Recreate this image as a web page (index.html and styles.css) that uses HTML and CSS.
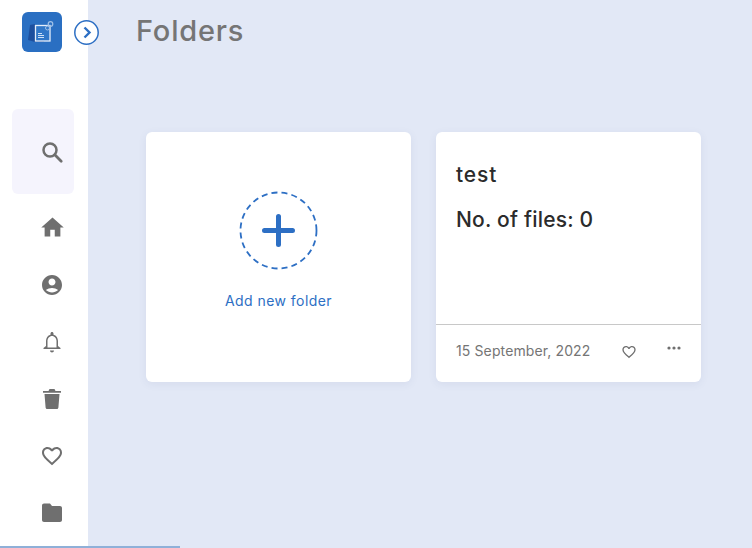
FILE: index.html
```html
<!DOCTYPE html>
<html lang="en">
<head>
<title>Folders</title>
<meta charset="utf-8">
<link rel="stylesheet" href="styles.css">
</head>
<body>
<div class="app">
	<nav class="sidebar">
		<div class="logo">
			<svg width="40" height="40" viewBox="0 0 40 40">
				<path d="M8 13l5-1v18l-7-2z" fill="#1d4f9e"/>
				<path d="M13 28h9v2h-9z" fill="#1d4f9e"/>
				<rect x="13.500" y="13.500" width="14.500" height="15.500" fill="#3177c8" stroke="#e6eefa" stroke-width="1.300"/>
				<path d="M16 21.500h4M16 23.500h6M16 25.500h6" stroke="#cfe0f5" stroke-width="1"/>
				<circle cx="28.500" cy="12" r="2.300" fill="none" stroke="#9fc0e8" stroke-width="1.200"/>
				<circle cx="25.500" cy="16" r="2" fill="none" stroke="#9fc0e8" stroke-width="1"/>
			</svg>
		</div>
		<div class="toggle">
			<svg width="25" height="25" viewBox="0 0 25 25">
				<circle cx="12.500" cy="12.500" r="11.700" fill="#fff" stroke="#2d6fc4" stroke-width="1.500"/>
				<path d="M10.500 7.500l5 5-5 5" fill="none" stroke="#2d6fc4" stroke-width="2.400"/>
			</svg>
		</div>
		<div class="search">
			<svg class="icon search-icon" viewBox="0 0 24 24"><circle cx="10" cy="10" r="6.500" fill="none" stroke="#6f6f6f" stroke-width="2.500"/><path d="M14.800 14.800l6.400 6.400" stroke="#6f6f6f" stroke-width="2.800" stroke-linecap="round"/></svg>
		</div>
		<ul class="menu">
			<li><svg class="icon home" viewBox="0 0 24 24"><path d="M10 20v-6h4v6h5v-8h3L12 3 2 12h3v8z"/></svg></li>
			<li><svg class="icon" viewBox="0 0 24 24"><path d="M12 2C6.480 2 2 6.480 2 12s4.480 10 10 10 10-4.480 10-10S17.520 2 12 2zm0 3.500c1.930 0 3.500 1.570 3.500 3.500S13.930 12.500 12 12.500 8.500 10.930 8.500 9 10.070 5.500 12 5.500zm0 14c-2.030 0-4.430-.62-6.140-2.380C7.550 15.800 9.680 15 12 15s4.450.8 6.140 2.120C16.430 18.880 14.030 19.500 12 19.500z"/></svg></li>
			<li><svg class="icon" viewBox="0 0 24 24"><path d="M12 22.500c1.100 0 2-.9 2-2h-4c0 1.100.9 2 2 2zm6-6.500v-5c0-3.070-1.630-5.640-4.500-6.320V3.500c0-.83-.67-1.500-1.500-1.500s-1.500.67-1.500 1.500v1.180C7.640 5.360 6 7.920 6 11v5l-2.500 2v1h17v-1L18 16zm-1.500 1.500h-9V11c0-2.480 2-5 4.500-5s4.500 2.520 4.500 5v6.500z"/></svg></li>
			<li><svg class="icon" viewBox="0 0 24 24"><path d="M4.500 7h15l-1.100 13.500c-.1.900-.6 1.500-1.500 1.500H7.100c-.9 0-1.400-.6-1.500-1.500L4.500 7zM3 4h5.500L9.500 2h5l1 2H21v1.800H3z"/></svg></li>
			<li><svg class="icon" viewBox="0 0 24 24"><path d="M16.500 3c-1.740 0-3.410.81-4.500 2.090C10.910 3.810 9.240 3 7.500 3 4.420 3 2 5.420 2 8.500c0 3.780 3.400 6.860 8.550 11.540L12 21.350l1.450-1.320C18.600 15.360 22 12.280 22 8.500 22 5.420 19.580 3 16.500 3zm-4.400 15.550l-.1.1-.1-.1C7.140 14.240 4 11.390 4 8.500 4 6.500 5.500 5 7.500 5c1.540 0 3.040.99 3.570 2.360h1.870C13.460 5.990 14.960 5 16.500 5c2 0 3.500 1.500 3.500 3.500 0 2.890-3.140 5.740-7.900 10.050z"/></svg></li>
			<li><svg class="icon" viewBox="0 0 24 24"><path d="M10 2.500H4c-1.100 0-1.990.9-1.990 2L2 19c0 1.100.9 2 2 2h16c1.100 0 2-.9 2-2V7c0-1.100-.9-2-2-2h-8l-2-2.500z"/></svg></li>
		</ul>
	</nav>

	<main class="content">
		<h1 class="title">Folders</h1>
		<div class="cards">
			<div class="card add-card">
				<svg width="80" height="80" viewBox="0 0 80 80">
					<circle cx="39.500" cy="39.500" r="38" fill="none" stroke="#2d6fc4" stroke-width="1.800" stroke-dasharray="6 4.100"/>
					<path d="M25.500 39.500h28M39.500 25.500v28" fill="none" stroke="#2d6fc4" stroke-width="5" stroke-linecap="round"/>
				</svg>
				<span class="add-label">Add new folder</span>
			</div>
			<div class="card folder-card">
				<div class="folder-info">
					<div class="folder-name">test</div>
					<div class="folder-count">No. of files: 0</div>
				</div>
				<div class="folder-foot">
					<span class="folder-date">15 September, 2022</span>
					<svg class="foot-heart" viewBox="0 0 24 24"><path d="M16.500 3c-1.740 0-3.410.81-4.500 2.090C10.910 3.810 9.240 3 7.500 3 4.420 3 2 5.420 2 8.500c0 3.780 3.400 6.860 8.550 11.540L12 21.350l1.450-1.320C18.600 15.360 22 12.280 22 8.500 22 5.420 19.580 3 16.500 3zm-4.400 15.550l-.1.1-.1-.1C7.140 14.240 4 11.390 4 8.500 4 6.500 5.500 5 7.500 5c1.540 0 3.040.99 3.570 2.360h1.870C13.460 5.990 14.960 5 16.500 5c2 0 3.500 1.500 3.500 3.500 0 2.890-3.140 5.740-7.900 10.050z"/></svg>
					<svg class="foot-more" viewBox="0 0 14 4"><circle cx="2" cy="2" r="1.600"/><circle cx="7" cy="2" r="1.600"/><circle cx="12" cy="2" r="1.600"/></svg>
				</div>
			</div>
		</div>
	</main>
</div>
<div class="scroll-thumb"></div>
</body>
</html>
```

FILE: styles.css
```css
html, body{
	margin: 0;
	height: 100%;
	overflow: hidden;
}
body{
	background-color: #e2e8f6;
	font-family: "Inter", "Open Sans", sans-serif;
}
.app{
	display: flex;
	height: 548px;
}

/* left bar */
.sidebar{
	position: relative;
	flex: 0 0 88px;
	background: #fff;
	padding: 12px 14px 0 12px;
	box-sizing: border-box;
}
.logo{
	width: 40px;
	height: 40px;
	margin-left: 10px;
	border-radius: 6px;
	background: #2a6fc2;
}
.logo svg{ display: block; }
.toggle{
	position: absolute;
	left: 74px;
	top: 20px;
	width: 25px;
	height: 25px;
}
.toggle svg{ display: block; }
.search{
	display: flex;
	align-items: center;
	justify-content: center;
	width: 62px;
	height: 85px;
	margin-top: 57px;
	padding-left: 18px;
	box-sizing: border-box;
	border-radius: 6px;
	background: #f5f4fd;
}
.icon{
	display: block;
	width: 24px;
	height: 24px;
	fill: #6f6f6f;
}
.search-icon{ flex: none; }
.menu{
	list-style: none;
	margin: 5px 0 0 0;
	padding: 0 0 0 28px;
}
.menu li{
	display: flex;
	align-items: center;
	justify-content: center;
	width: 24px;
	height: 57px;
}
.icon.home{
	flex: none;
	width: 27px;
	height: 27px;
}

/* main part */
.content{
	flex: 1;
	padding: 0 51px 0 48px;
}
.title{
	margin: 0;
	padding-top: 10px;
	height: 132px;
	box-sizing: border-box;
	color: #757575;
	font-size: 29px;
	font-weight: 500;
	line-height: 42px;
	letter-spacing: 0.8px;
}
.cards{
	display: flex;
	gap: 25px;
	margin-left: 10px;
}
.card{
	width: 265px;
	height: 250px;
	border-radius: 6px;
	background: #fff;
	box-shadow: 0 2px 8px rgba(60, 80, 130, 0.08);
}
.add-card{
	display: flex;
	flex-direction: column;
	align-items: center;
	padding-top: 59px;
	box-sizing: border-box;
}
.add-card svg{ display: block; }
.add-label{
	margin-top: 20px;
	color: #2d6fc4;
	font-size: 14px;
	line-height: 20px;
	letter-spacing: 0.45px;
}
.folder-card{
	display: flex;
	flex-direction: column;
}
.folder-info{
	flex: 0 0 193px;
	padding: 28px 20px 0 20px;
	box-sizing: border-box;
	border-bottom: 1px solid #c8c8c8;
	color: #2b2b2b;
	font-size: 21px;
	font-weight: 500;
	line-height: 30px;
	letter-spacing: 0.2px;
}
.folder-name{ letter-spacing: 0.9px; }
.folder-count{ margin-top: 15px; }
.folder-foot{
	display: flex;
	align-items: center;
	padding: 0 20px;
	height: 54px;
	color: #757575;
}
.folder-date{
	flex: 1;
	margin-top: -3px;
	font-size: 14px;
	letter-spacing: 0.12px;
}
.foot-heart{
	width: 16px;
	height: 16px;
	fill: #6f6f6f;
	margin-right: 30px;
}
.foot-more{
	width: 14px;
	height: 4px;
	fill: #6f6f6f;
	margin-top: -8px;
}

.scroll-thumb{
	position: absolute;
	left: 0;
	bottom: 0;
	width: 180px;
	height: 2px;
	background: #8fb0d8;
}
```
